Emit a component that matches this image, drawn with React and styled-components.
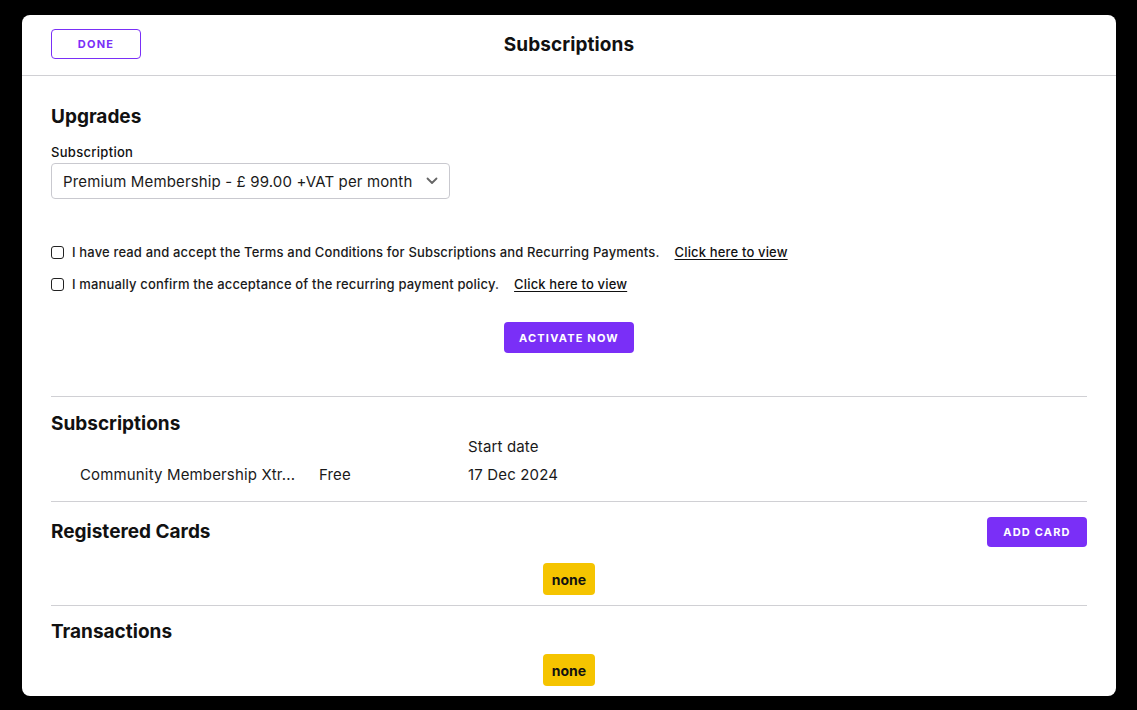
import React from "react";
import styled, { createGlobalStyle } from "styled-components";

const Global = createGlobalStyle`
  html, body { margin: 0; padding: 0; background: #000; }
  body { font-family: Inter, "Noto Sans", sans-serif; color: #111; }
  * { box-sizing: border-box; }
`;

const PURPLE = "#7a2ff7";

const Page = styled.div`
  padding: 15px 21px 14px 22px;
  background: #000;
`;

const Modal = styled.div`
  background: #fff;
  border-radius: 8px;
  height: 681px;
  overflow: hidden;
  display: flex;
  flex-direction: column;
`;

const Header = styled.header`
  height: 61px;
  border-bottom: 1px solid #d0d0d4;
  display: grid;
  grid-template-columns: 1fr auto 1fr;
  align-items: center;
  padding: 0 29px 2px;
`;

const OutlineButton = styled.button`
  justify-self: start;
  width: 90px;
  height: 30px;
  border: 1px solid ${PURPLE};
  border-radius: 4px;
  background: #fff;
  color: ${PURPLE};
  font-family: Inter, sans-serif;
  font-size: 11px;
  font-weight: 700;
  letter-spacing: 1.2px;
  cursor: pointer;
`;

const Title = styled.h1`
  margin: 0;
  font-size: 19px;
  font-weight: 700;
  letter-spacing: 0.1px;
`;

const Body = styled.main`
  padding: 0 29px;
  display: flex;
  flex-direction: column;
`;

const SectionTitle = styled.h2`
  margin: ${(p) => p.$mt || 0}px 0 0;
  font-size: 19px;
  line-height: 24px;
  font-weight: 700;
  letter-spacing: 0;
`;

const Label = styled.label`
  margin-top: 15px;
  font-size: 13px;
  line-height: 16px;
  font-weight: 500;
  letter-spacing: 0.3px;
`;

const SelectBox = styled.div`
  margin-top: 3px;
  width: 399px;
  height: 36px;
  border: 1px solid #c9c9cf;
  border-radius: 4px;
  display: flex;
  align-items: center;
  justify-content: space-between;
  padding: 0 11px 0 11px;
  font-size: 15px;
  letter-spacing: 0.14px;
  color: #1a1a1a;
`;

const CheckList = styled.div`
  margin-top: 43px;
  display: flex;
  flex-direction: column;
  gap: 12px;
`;

const CheckRow = styled.div`
  height: 20px;
  display: flex;
  align-items: center;
  font-size: 13px;
  font-weight: 500;
  letter-spacing: 0.16px;
  color: #1a1a1a;
`;

const Box = styled.input.attrs({ type: "checkbox" })`
  appearance: none;
  margin: 0 8px 0 0;
  width: 13px;
  height: 13px;
  border: 1px solid #222;
  border-radius: 3px;
  background: #fff;
`;

const Link = styled.a`
  margin-left: 15px;
  color: #111;
  text-decoration: underline;
  text-underline-offset: 2px;
  cursor: pointer;
`;

const SolidButton = styled.button`
  align-self: ${(p) => p.$align || "center"};
  margin-top: ${(p) => p.$mt || 0}px;
  width: ${(p) => p.$w}px;
  height: ${(p) => p.$h}px;
  border: none;
  border-radius: 4px;
  background: ${PURPLE};
  color: #fff;
  font-family: Inter, sans-serif;
  font-size: 11px;
  font-weight: 700;
  letter-spacing: 1.2px;
  cursor: pointer;
`;

const Divider = styled.hr`
  margin: ${(p) => p.$mt}px 0 0;
  border: none;
  border-top: 1px solid #d0d0d4;
  height: 0;
`;

const Table = styled.div`
  display: grid;
  grid-template-columns: 239px 149px 1fr;
  padding-left: 29px;
  font-size: 15px;
  letter-spacing: 0.15px;
  color: #1a1a1a;
`;

const HeadCell = styled.div`
  margin-top: 1px;
  line-height: 20px;
  grid-column: ${(p) => p.$col};
`;

const Cell = styled.div`
  margin-top: 8px;
  line-height: 20px;
  white-space: nowrap;
  overflow: hidden;
  text-overflow: ellipsis;
  padding-right: 10px;
`;

const SectionRow = styled.div`
  margin-top: 15px;
  height: 30px;
  display: flex;
  align-items: center;
  justify-content: space-between;
`;

const Badge = styled.span`
  align-self: center;
  margin-top: ${(p) => p.$mt}px;
  width: 52px;
  height: 32px;
  display: flex;
  align-items: center;
  justify-content: center;
  background: #f5c400;
  border-radius: 4px;
  font-size: 14px;
  font-weight: 700;
  color: #111;
`;

const Chevron = () => (
  <svg width="12" height="8" viewBox="0 0 12 8" fill="none">
    <path d="M1.5 1.5 L6 6 L10.5 1.5" stroke="#666" strokeWidth="1.8" strokeLinecap="round" strokeLinejoin="round" />
  </svg>
);

export default function App() {
  return (
    <>
      <Global />
      <Page>
        <Modal>
          <Header>
            <OutlineButton>DONE</OutlineButton>
            <Title>Subscriptions</Title>
            <span />
          </Header>
          <Body>
            <SectionTitle $mt={29}>Upgrades</SectionTitle>
            <Label>Subscription</Label>
            <SelectBox>
              <span>Premium Membership - £ 99.00 +VAT per month</span>
              <Chevron />
            </SelectBox>
            <CheckList>
              <CheckRow>
                <Box />
                I have read and accept the Terms and Conditions for Subscriptions and Recurring Payments.
                <Link>Click here to view</Link>
              </CheckRow>
              <CheckRow>
                <Box />
                I manually confirm the acceptance of the recurring payment policy.
                <Link>Click here to view</Link>
              </CheckRow>
            </CheckList>
            <SolidButton $mt={28} $w={130} $h={31}>ACTIVATE NOW</SolidButton>
            <Divider $mt={43} />
            <SectionTitle $mt={15}>Subscriptions</SectionTitle>
            <Table>
              <HeadCell $col={3}>Start date</HeadCell>
              <Cell>Community Membership Xtr...</Cell>
              <Cell>Free</Cell>
              <Cell>17 Dec 2024</Cell>
            </Table>
            <Divider $mt={16} />
            <SectionRow>
              <SectionTitle>Registered Cards</SectionTitle>
              <SolidButton $align="center" $w={100} $h={30}>ADD CARD</SolidButton>
            </SectionRow>
            <Badge $mt={16}>none</Badge>
            <Divider $mt={10} />
            <SectionTitle $mt={14}>Transactions</SectionTitle>
            <Badge $mt={10}>none</Badge>
          </Body>
        </Modal>
      </Page>
    </>
  );
}
